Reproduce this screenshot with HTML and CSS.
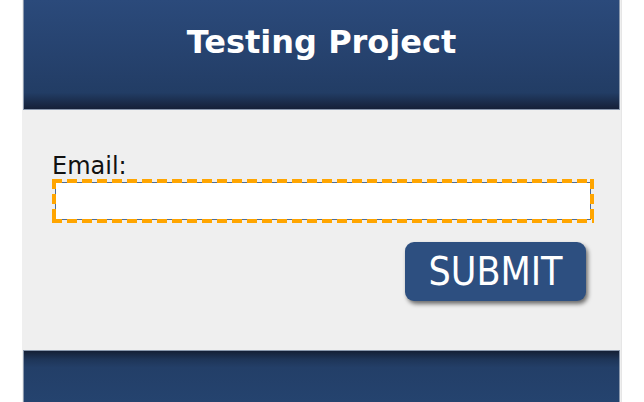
FILE: index.html
```html
<!DOCTYPE html>
<html>
<head>
<meta charset="utf-8">
<link rel="stylesheet" href="styles.css">
</head>
<body>
<div class="page">
  <header class="header">
    <h1 class="title">Testing Project</h1>
  </header>
  <main class="main">
    <form class="form">
      <label class="label" for="email">Email:</label>
      <span class="field"><input class="input" id="email" type="text"></span>
      <div class="actions">
        <button class="submit" type="button">SUBMIT</button>
      </div>
    </form>
  </main>
  <footer class="footer"></footer>
</div>
</body>
</html>
```

FILE: styles.css
```css
html, body {
  margin: 0;
  padding: 0;
  background: #ffffff;
  height: 100%;
  overflow: hidden;
}

.page {
  margin-left: 22px;
  width: 599px;
  background: #efefef;
  border-right: 1px solid #e6e6e6;
  display: flex;
  flex-direction: column;
}

.header {
  height: 110px;
  box-sizing: border-box;
  padding-top: 23px;
  margin: 0 1px;
  border: 1px solid #8a98ad;
  border-top: none;
  background: linear-gradient(to bottom, #2b4a7b 0%, #243f69 70%, #223d65 85%, #152038 100%);
}

.title {
  margin: 0;
  font-family: "DejaVu Sans", Verdana, sans-serif;
  font-weight: bold;
  font-size: 32px;
  line-height: 38px;
  color: #ffffff;
  text-align: center;
}

.main {
  height: 240px;
  box-sizing: border-box;
  padding: 43px 35px 0 30px;
}

.form {
  display: flex;
  flex-direction: column;
}

.label {
  display: block;
  font-family: "DejaVu Sans", Verdana, sans-serif;
  font-size: 24px;
  line-height: 26px;
  color: #111111;
}

.field {
  position: relative;
  display: block;
  width: 542px;
  box-sizing: border-box;
  padding: 3px;
}

.field::after {
  content: "";
  position: absolute;
  inset: 0;
  pointer-events: none;
  background:
    repeating-linear-gradient(to right, #ffa500 0 10px, transparent 10px 15px) top left / 100% 4px no-repeat,
    repeating-linear-gradient(to right, #ffa500 0 10px, transparent 10px 15px) bottom left / 100% 4px no-repeat,
    repeating-linear-gradient(to bottom, #ffa500 0 10px, transparent 10px 15px) top left / 4px 100% no-repeat,
    repeating-linear-gradient(to bottom, #ffa500 0 10px, transparent 10px 15px) top right / 4px 100% no-repeat;
}

.input {
  display: block;
  box-sizing: border-box;
  margin: 0;
  width: 536px;
  height: 38px;
  padding: 0;
  background: #ffffff;
  border: 1px solid #4f6c96;
  outline: none;
}

.actions {
  display: flex;
  justify-content: flex-end;
  margin-top: 19px;
}

.submit {
  width: 181px;
  height: 59px;
  padding: 0;
  border: none;
  border-radius: 9px;
  background: #2d4f80;
  color: #ffffff;
  font-family: "Liberation Sans Narrow", "DejaVu Sans Condensed", sans-serif;
  font-size: 39px;
  line-height: 59px;
  box-shadow: 2px 3px 4px rgba(0, 0, 0, 0.55);
}

.footer {
  height: 60px;
  box-sizing: border-box;
  margin: 0 1px;
  border: 1px solid #8a98ad;
  border-bottom: none;
  background: linear-gradient(to bottom, #141f35 0%, #1e3558 14%, #233f68 28%, #254470 100%);
}
```
